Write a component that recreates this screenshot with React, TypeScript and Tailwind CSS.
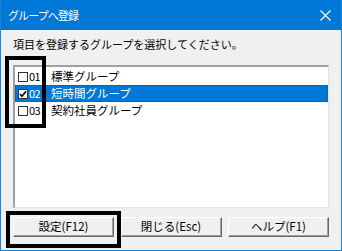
const groups = [
  { code: '01', name: '標準グループ', checked: false },
  { code: '02', name: '短時間グループ', checked: true },
  { code: '03', name: '契約社員グループ', checked: false },
];

const selectedIndex = 1;

function CheckBox({ checked }: { checked: boolean }) {
  return (
    <span className="flex h-[10px] w-[10px] items-center justify-center border border-[#333333] bg-white">
      {checked && (
        <svg width="8" height="8" viewBox="0 0 8 8">
          <path d="M1 4 L3 6.2 L7 1.2" fill="none" stroke="#000" strokeWidth="1.6" />
        </svg>
      )}
    </span>
  );
}

function WinButton({ label }: { label: string }) {
  return (
    <button
      type="button"
      className="flex h-[20px] w-[101px] items-center justify-center border-t border-l border-t-white border-l-white border-b border-r border-b-[#696969] border-r-[#696969] bg-[#f0f0f0] text-[11.5px] text-black shadow-[inset_-1px_-1px_0_#a0a0a0]"
    >
      {label}
    </button>
  );
}

export default function App() {
  return (
    <div className="relative flex h-[251px] w-[342px] flex-col border-x border-b border-[#1883d7] bg-[#f0f0f0] font-['Noto_Sans_CJK_JP',sans-serif]">
      {/* タイトルバー */}
      <div className="flex h-[30px] items-center justify-between bg-[#0078d7] pl-[7px] pr-[10px] text-white">
        <span className="text-[11px] tracking-[-0.9px]">グループへ登録</span>
        <svg width="11" height="11" viewBox="0 0 11 11">
          <path d="M0.5 0.5 L10.5 10.5 M10.5 0.5 L0.5 10.5" stroke="#fff" strokeWidth="1.1" />
        </svg>
      </div>

      <div className="flex flex-1 flex-col px-[12px]">
        <p className="mt-[6px] text-[11px] leading-[16px] text-black">
          項目を登録するグループを選択してください。
        </p>

        {/* リスト */}
        <div className="mt-[13px] h-[143px] border-t-2 border-l-2 border-t-[#a0a0a0] border-l-[#a0a0a0] border-b border-r border-b-[#e3e3e3] border-r-[#e3e3e3] bg-white pt-px">
          {groups.map((g, i) => {
            const active = i === selectedIndex;
            return (
              <div
                key={g.code}
                className={`flex h-[17px] items-center text-[11.5px] leading-none ${
                  active
                    ? 'border border-dotted border-[#1a4f8a] bg-[#0078d7] text-white'
                    : 'border border-transparent text-black'
                }`}
              >
                <span className="ml-[2px]">
                  <CheckBox checked={g.checked} />
                </span>
                <span className="ml-px w-[22px] text-[11px] tracking-[-0.5px]">{g.code}</span>
                <span>{g.name}</span>
              </div>
            );
          })}
        </div>

        {/* ボタン */}
        <div className="mt-[9px] flex justify-between">
          <WinButton label="設定(F12)" />
          <WinButton label="閉じる(Esc)" />
          <WinButton label="ヘルプ(F1)" />
        </div>
      </div>

      {/* 注釈の枠 */}
      <div className="pointer-events-none absolute left-[4px] top-[56px] h-[72px] w-[41px] border-4 border-black" />
      <div className="pointer-events-none absolute left-[5px] top-[211px] h-[37px] w-[115px] border-4 border-black" />
    </div>
  );
}
